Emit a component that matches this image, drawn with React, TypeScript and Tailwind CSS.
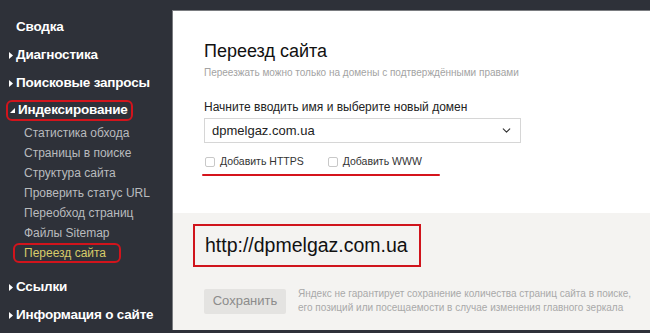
import { ChevronDown } from 'lucide-react';

const topItems = ['Сводка', 'Диагностика', 'Поисковые запросы'];
const subItems = [
  'Статистика обхода',
  'Страницы в поиске',
  'Структура сайта',
  'Проверить статус URL',
  'Переобход страниц',
  'Файлы Sitemap',
];

function Arrow() {
  return (
    <svg width="4" height="7" viewBox="0 0 4 7" className="shrink-0">
      <path d="M0 0 L4 3.5 L0 7 Z" fill="#ffffff" />
    </svg>
  );
}

function Checkbox({ label }: { label: string }) {
  return (
    <label className="flex items-center gap-[5px] whitespace-nowrap text-[10.5px] text-[#333]">
      <span className="h-[10px] w-[10px] rounded-[2px] border border-[#c8c8c8] bg-white" />
      {label}
    </label>
  );
}

export default function App() {
  return (
    <div
      className="flex h-[333px] w-[650px] overflow-hidden bg-[#2e3139]"
      style={{ fontFamily: '"Liberation Sans", Arial, sans-serif' }}
    >
      <aside className="w-[172px] shrink-0 pt-[13px] text-white">
        {topItems.map((t, i) => (
          <div key={t} className="flex h-7 items-center gap-[3px] pl-[9px] text-[13.5px] font-bold tracking-[-0.2px]">
            {i === 0 ? <span className="w-[4px]" /> : <Arrow />}
            <span>{t}</span>
          </div>
        ))}
        <div className="flex h-[26px] items-center pl-[6px]">
          <span className="flex h-[21px] items-center gap-[3px] rounded-[6px] border-2 border-[#d2141c] pl-[2px] pr-[3px] text-[13.5px] font-bold tracking-[-0.2px]">
            <svg width="5" height="5" viewBox="0 0 5 5" className="shrink-0">
              <path d="M5 0 L5 5 L0 5 Z" fill="#ffffff" />
            </svg>
            Индексирование
          </span>
        </div>
        {subItems.map((t) => (
          <div key={t} className="flex h-5 items-center pl-[24px] text-[12px] text-[#b9bbbe]">
            {t}
          </div>
        ))}
        <div className="flex h-5 items-center pl-[13px]">
          <span className="flex h-[20px] items-center rounded-[6px] border-2 border-[#d2141c] pl-[9px] pr-[13px] text-[12px] text-[#d8cc6a]">
            Переезд сайта
          </span>
        </div>
        <div className="mt-[10px] flex h-7 items-center gap-[3px] pl-[9px] text-[13.5px] font-bold tracking-[-0.2px]">
          <Arrow />
          <span>Ссылки</span>
        </div>
        <div className="flex h-7 items-center gap-[3px] pl-[9px] text-[13.5px] font-bold tracking-[-0.2px]">
          <Arrow />
          <span>Информация о сайте</span>
        </div>
      </aside>

      <main className="mt-[10px] mb-[3px] flex flex-1 flex-col border-t border-l border-[#7a7c80] bg-white">
        <section className="h-[202px] pl-[31px] pt-[29px]">
          <h1 className="text-[18px] leading-[22px] text-[#111]">Переезд сайта</h1>
          <p className="mt-[3px] text-[10px] text-[#a3a3a3]">
            Переезжать можно только на домены с подтверждёнными правами
          </p>
          <p className="mt-[18px] text-[12px] text-[#222]">Начните вводить имя и выберите новый домен</p>
          <div className="mt-[2px] flex h-[25px] w-[317px] items-center justify-between border border-[#d6d6d6] pl-[7px] pr-[7px] text-[13px] text-[#222]">
            <span>dpmelgaz.com.ua</span>
            <ChevronDown size={13} strokeWidth={2} className="text-[#333]" />
          </div>
          <div className="mt-[11px] flex w-[238px] flex-col">
            <div className="flex gap-[24px] pl-[1px]">
              <Checkbox label="Добавить HTTPS" />
              <Checkbox label="Добавить WWW" />
            </div>
            <div className="-ml-[2px] mt-[4px] h-[2px] w-[238px] rounded-full bg-[#d5141c]" />
          </div>
        </section>

        <section className="flex flex-1 flex-col bg-[#f4f3f1] pl-[20px] pt-[11px]">
          <div className="flex h-[43px] w-[228px] items-center border-2 border-[#d0141c] pl-[10px] text-[19.5px] text-[#111]">
            http://dpmelgaz.com.ua
          </div>
          <div className="mt-[20px] flex items-center gap-[12px] pl-[11px]">
            <button className="h-[25px] w-[82px] shrink-0 rounded-[2px] bg-[#e4e3e1] text-[13px] text-[#8c8c8c]">
              Сохранить
            </button>
            <p className="whitespace-nowrap text-[10px] leading-[14px] text-[#a9a9a9]">
              Яндекс не гарантирует сохранение количества страниц сайта в поиске,
              <br />
              его позиций или посещаемости в случае изменения главного зеркала
            </p>
          </div>
        </section>
      </main>
    </div>
  );
}
